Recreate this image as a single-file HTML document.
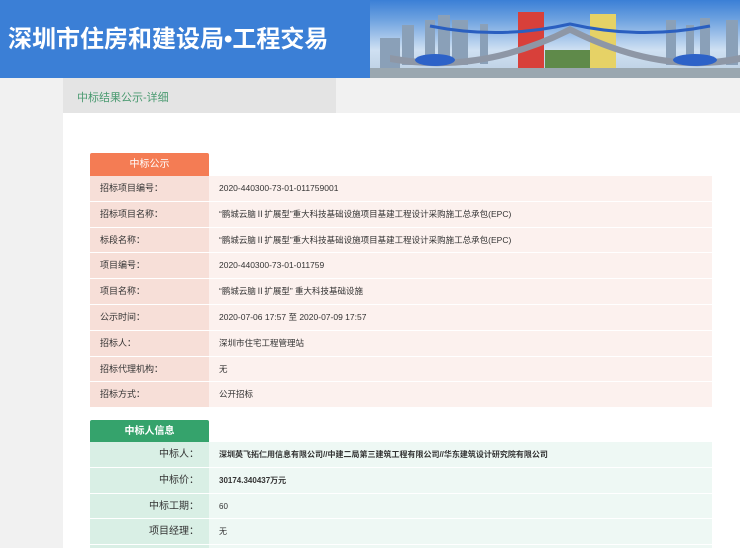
<!DOCTYPE html>
<html><head><meta charset="utf-8"><style>
*{margin:0;padding:0;box-sizing:border-box}
html,body{width:740px;height:548px;overflow:hidden}
body{background:#f1f1f1;font-family:"Liberation Sans","Noto Sans CJK SC",sans-serif;position:relative}
.hdr{position:absolute;left:0;top:0;width:740px;height:78px;background:#3b7fd6}
.title{position:absolute;left:8px;top:19px;color:#fff;font-size:24px;font-weight:bold;font-family:"Noto Sans CJK SC",sans-serif;white-space:nowrap}
.title .d{font-family:"Liberation Sans",sans-serif}
.img{position:absolute;left:370px;top:0;width:370px;height:78px;background:linear-gradient(#3b7fd6 0,#6fa3e0 20px,#cfe0f2 50px,#b9cde0 78px)}
.crumb{position:absolute;left:63px;top:78px;width:273px;height:35px;background:#e4e4e4;color:#4a9a70;font-size:11px;padding:11px 0 0 14px}
.panel{position:absolute;left:63px;top:113px;width:677px;height:435px;background:#fff}
.tab{position:absolute;left:90px;width:119px;height:23px;color:#fff;font-size:10px;text-align:center;line-height:23px;border-radius:2px 2px 0 0}
.t1{top:153px;background:#f47c54}
.t2{top:420px;background:#35a36c;font-weight:bold}
.tbl{position:absolute;left:90px;width:622px}
.row{height:25.8px;display:flex;font-size:9px;color:#333;border-bottom:1px solid rgba(255,255,255,.6)}
.o .row .l{width:119px;background:#f7dfd8;padding-left:10px;line-height:25px}
.o .row .v{flex:1;background:#fcf1ee;padding-left:10px;line-height:25px;font-size:8.5px}
.g .row .l{width:119px;background:#d9efe5;text-align:right;padding-right:10px;line-height:25px;font-size:10px}
.g .row .v{flex:1;background:#eef8f4;padding-left:10px;line-height:25px;font-size:8px}
.b{font-weight:bold}
</style></head><body>
<div class="hdr"><div class="title">深圳市住房和建设局<span class="d">•</span>工程交易</div>
<div class="img">
<svg width="370" height="78" viewBox="0 0 370 78">
<g fill="#8aa0b8"><rect x="32" y="25" width="12" height="40"/><rect x="55" y="20" width="10" height="45"/><rect x="68" y="15" width="12" height="50"/><rect x="82" y="20" width="16" height="45"/><rect x="110" y="24" width="8" height="40"/><rect x="10" y="38" width="20" height="30"/><rect x="296" y="20" width="10" height="45"/><rect x="316" y="25" width="8" height="40"/><rect x="330" y="18" width="10" height="45"/><rect x="356" y="20" width="12" height="45"/></g>
<rect x="148" y="12" width="26" height="64" fill="#d8403a"/>
<rect x="220" y="14" width="26" height="62" fill="#e6d266"/>
<path d="M20 55 Q110 72 200 26 Q290 72 370 55 L370 62 Q290 78 200 33 Q110 78 20 62Z" fill="#8e97a6"/>
<path d="M60 26 Q130 40 200 24 Q270 40 340 26" stroke="#2a5fc0" stroke-width="3" fill="none"/>
<ellipse cx="65" cy="60" rx="20" ry="6" fill="#2d62c8"/><ellipse cx="325" cy="60" rx="22" ry="6" fill="#2d62c8"/>
<rect x="175" y="50" width="45" height="26" fill="#5f8a4a"/>
<rect x="0" y="68" width="370" height="10" fill="#9aa7b0"/>
</svg></div></div>
<div class="crumb">中标结果公示-详细</div>
<div class="panel"></div>
<div class="tab t1">中标公示</div>
<div class="tbl o" style="top:176px">
<div class="row"><div class="l">招标项目编号：</div><div class="v">2020-440300-73-01-011759001</div></div>
<div class="row"><div class="l">招标项目名称：</div><div class="v">“鹏城云脑Ⅱ扩展型”重大科技基础设施项目基建工程设计采购施工总承包(EPC)</div></div>
<div class="row"><div class="l">标段名称：</div><div class="v">“鹏城云脑Ⅱ扩展型”重大科技基础设施项目基建工程设计采购施工总承包(EPC)</div></div>
<div class="row"><div class="l">项目编号：</div><div class="v">2020-440300-73-01-011759</div></div>
<div class="row"><div class="l">项目名称：</div><div class="v">“鹏城云脑Ⅱ扩展型” 重大科技基础设施</div></div>
<div class="row"><div class="l">公示时间：</div><div class="v">2020-07-06 17:57 至 2020-07-09 17:57</div></div>
<div class="row"><div class="l">招标人：</div><div class="v">深圳市住宅工程管理站</div></div>
<div class="row"><div class="l">招标代理机构：</div><div class="v">无</div></div>
<div class="row"><div class="l">招标方式：</div><div class="v">公开招标</div></div>
</div>
<div class="tab t2">中标人信息</div>
<div class="tbl g" style="top:442px">
<div class="row"><div class="l">中标人：</div><div class="v b">深圳英飞拓仁用信息有限公司//中建二局第三建筑工程有限公司//华东建筑设计研究院有限公司</div></div>
<div class="row"><div class="l">中标价：</div><div class="v b">30174.340437万元</div></div>
<div class="row"><div class="l">中标工期：</div><div class="v">60</div></div>
<div class="row"><div class="l">项目经理：</div><div class="v">无</div></div>
<div class="row"><div class="l"></div><div class="v"></div></div>
</div>
</body></html>
